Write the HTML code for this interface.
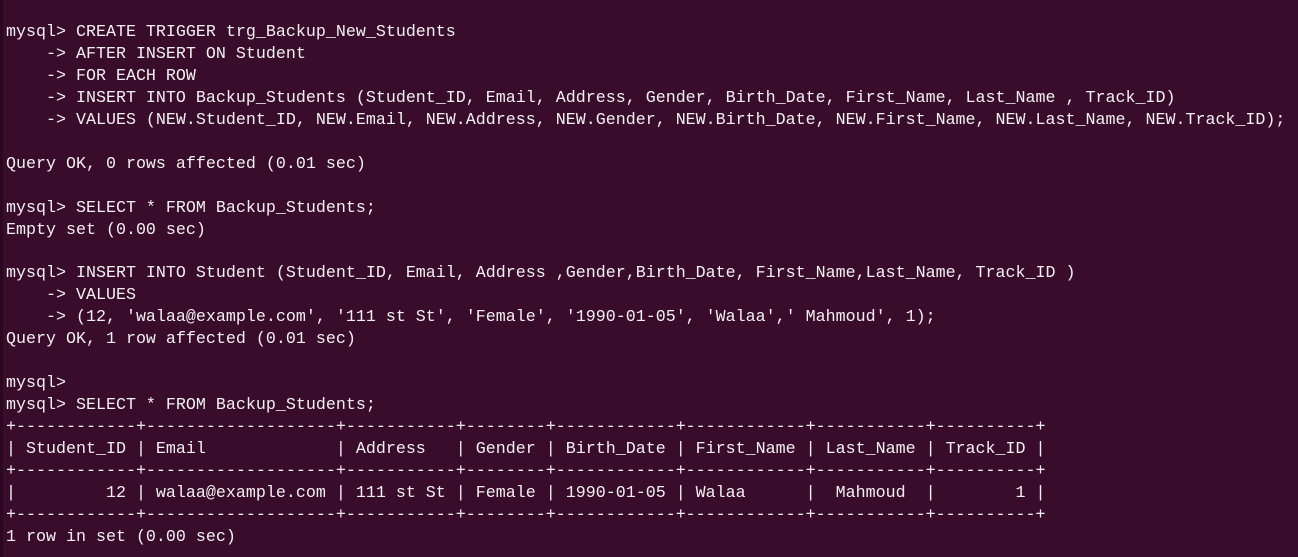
<!DOCTYPE html>
<html><head><meta charset="utf-8"><style>
html,body{margin:0;padding:0;width:1298px;height:557px;overflow:hidden;background:#380c2a;}
body{position:relative;}
.strip{position:absolute;left:0;top:0;width:3px;height:557px;background:#2a0820;}
pre{position:absolute;left:6px;top:22px;margin:0;font-family:"Liberation Mono",monospace;font-size:16.67px;line-height:21.95px;color:#f2f0f1;white-space:pre;}
</style></head><body><div class="strip"></div><pre>mysql&gt; CREATE TRIGGER trg_Backup_New_Students
    -&gt; AFTER INSERT ON Student
    -&gt; FOR EACH ROW
    -&gt; INSERT INTO Backup_Students (Student_ID, Email, Address, Gender, Birth_Date, First_Name, Last_Name , Track_ID)
    -&gt; VALUES (NEW.Student_ID, NEW.Email, NEW.Address, NEW.Gender, NEW.Birth_Date, NEW.First_Name, NEW.Last_Name, NEW.Track_ID);

Query OK, 0 rows affected (0.01 sec)

mysql&gt; SELECT * FROM Backup_Students;
Empty set (0.00 sec)

mysql&gt; INSERT INTO Student (Student_ID, Email, Address ,Gender,Birth_Date, First_Name,Last_Name, Track_ID )
    -&gt; VALUES
    -&gt; (12, 'walaa@example.com', '111 st St', 'Female', '1990-01-05', 'Walaa',' Mahmoud', 1);
Query OK, 1 row affected (0.01 sec)

mysql&gt;
mysql&gt; SELECT * FROM Backup_Students;
+------------+-------------------+-----------+--------+------------+------------+-----------+----------+
| Student_ID | Email             | Address   | Gender | Birth_Date | First_Name | Last_Name | Track_ID |
+------------+-------------------+-----------+--------+------------+------------+-----------+----------+
|         12 | walaa@example.com | 111 st St | Female | 1990-01-05 | Walaa      |  Mahmoud  |        1 |
+------------+-------------------+-----------+--------+------------+------------+-----------+----------+
1 row in set (0.00 sec)</pre></body></html>
